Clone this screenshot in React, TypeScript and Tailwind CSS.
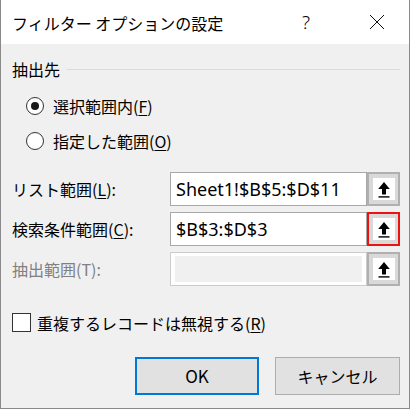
const jp = "font-['Noto_Sans_CJK_JP','Noto_Sans',sans-serif]";

const UpArrow = () => (
  <svg width="14" height="17" viewBox="0 0 14 17">
    <path d="M7 1 L12.8 8 H9 V13.5 H5 V8 H1.2 Z" fill="#000" />
    <rect x="1.5" y="15.2" width="11" height="1.4" fill="#000" />
  </svg>
);

const RefButton = ({ highlight = false }: { highlight?: boolean }) => (
  <div
    className={
      highlight
        ? "w-[33px] h-[34px] border-2 border-[#ee1111] bg-[#d9d9d9] flex items-center justify-center"
        : "w-[33px] h-[34px] border-2 border-[#b0b0b0] bg-[#d9d9d9] flex items-center justify-center"
    }
  >
    <div className="w-[22px] h-[22px] bg-white flex items-center justify-center">
      <UpArrow />
    </div>
  </div>
);

const Radio = ({ checked, label, hotkey }: { checked: boolean; label: string; hotkey: string }) => (
  <div className="h-[22px] flex items-center pl-[14px]">
    <div className="w-[18px] h-[18px] rounded-full border border-[#333333] bg-white flex items-center justify-center">
      {checked && <div className="w-[8px] h-[8px] rounded-full bg-[#1a1a1a]" />}
    </div>
    <span className="ml-[9px] text-[16px] leading-[20px]">
      {label}(<span className="underline underline-offset-2">{hotkey}</span>)
    </span>
  </div>
);

const RangeRow = ({
  label,
  hotkey,
  value,
  disabled = false,
  highlight = false,
}: {
  label: string;
  hotkey: string;
  value?: string;
  disabled?: boolean;
  highlight?: boolean;
}) => (
  <div className="h-[34px] flex items-center">
    <div className={disabled ? "w-[158px] text-[16px] leading-[20px] text-[#808080]" : "w-[158px] text-[16px] leading-[20px]"}>
      {label}(
      {disabled ? hotkey : <span className="underline underline-offset-2">{hotkey}</span>}
      ):
    </div>
    {disabled ? (
      <div className="w-[197px] h-[34px] border border-[#cccccc] bg-white pt-[3px] px-[4px] pb-[3px]">
        <div className="w-full h-full bg-[#f0f0f0]" />
      </div>
    ) : (
      <div className="w-[197px] h-[34px] border border-[#a8a8a8] bg-white flex items-center pl-[5px]">
        <span className="font-['Noto_Sans',sans-serif] text-[18px] leading-[20px]">{value}</span>
      </div>
    )}
    <RefButton highlight={highlight} />
  </div>
);

export default function App() {
  return (
    <div className={`w-[410px] h-[409px] border-x border-b border-[#8a8a8a] bg-[#f0f0f0] flex flex-col text-black ${jp}`}>
      <div className="h-[44px] bg-white flex items-center pl-[11px] pr-[9px]">
        <span className="text-[16px] leading-[20px] mt-[2px]">フィルター オプションの設定</span>
        <div className="ml-auto flex items-center">
          <div className="w-[46px] h-[30px] flex items-center justify-center font-['Noto_Sans',sans-serif] font-light text-[19px]">
            ?
          </div>
          <div className="w-[46px] h-[30px] ml-[25px] flex items-center justify-center">
            <svg width="16" height="16" viewBox="0 0 16 16">
              <path d="M1 1 L15 15 M15 1 L1 15" stroke="#111" strokeWidth="1" fill="none" />
            </svg>
          </div>
        </div>
      </div>

      <div className="flex flex-col pl-[11px] pr-[9px]">
        <div className="mt-[16px] h-[18px] flex items-center">
          <span className="text-[16px] leading-[18px]">抽出先</span>
          <div className="flex-1 h-px bg-[#dadada] ml-[7px]" />
        </div>

        <div className="mt-[17px]">
          <Radio checked label="選択範囲内" hotkey="F" />
        </div>
        <div className="mt-[13px]">
          <Radio checked={false} label="指定した範囲" hotkey="O" />
        </div>

        <div className="mt-[20px] flex flex-col gap-[6px]">
          <RangeRow label="リスト範囲" hotkey="L" value="Sheet1!$B$5:$D$11" />
          <RangeRow label="検索条件範囲" hotkey="C" value="$B$3:$D$3" highlight />
          <RangeRow label="抽出範囲" hotkey="T" disabled />
        </div>

        <div className="mt-[27px] h-[19px] flex items-center">
          <div className="w-[19px] h-[19px] border border-[#333333] bg-white" />
          <span className="ml-[6px] text-[16px] leading-[20px]">
            重複するレコードは無視する(<span className="underline underline-offset-2">R</span>)
          </span>
        </div>

        <div className="mt-[25px] flex justify-end gap-[16px]">
          <button className="w-[124px] h-[38px] border-2 border-[#0078d7] bg-[#e1e1e1] text-[17px] leading-[20px]">
            OK
          </button>
          <button className="w-[125px] h-[38px] border border-[#adadad] bg-[#e1e1e1] text-[16px] leading-[20px]">
            キャンセル
          </button>
        </div>
      </div>
    </div>
  );
}
